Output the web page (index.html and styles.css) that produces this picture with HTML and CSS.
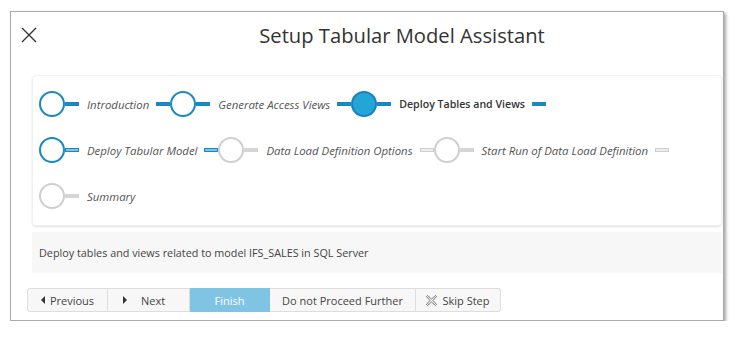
FILE: index.html
```html
<!DOCTYPE html>
<html lang="en">
<head>
  <meta charset="UTF-8">
  <title>Setup Tabular Model Assistant</title>
  <link rel="stylesheet" href="styles.css">
</head>
<body>
  <div class="dialog">
    <div class="header">
      <span class="close-button">
        <svg width="16" height="16" viewBox="0 0 16 16"><path d="M1 1 L15 15 M15 1 L1 15" stroke="#333" stroke-width="1.4" fill="none"/></svg>
      </span>
      <h1 class="title">Setup Tabular Model Assistant</h1>
    </div>

    <!-- Steps -->
    <div class="steps">
      <div class="step done">
        <span class="circle"></span><span class="line"></span>
        <span class="label">Introduction</span><span class="line"></span>
      </div>
      <div class="step done">
        <span class="circle"></span><span class="line"></span>
        <span class="label">Generate Access Views</span><span class="line"></span>
      </div>
      <div class="step done current">
        <span class="circle"></span><span class="line"></span>
        <span class="label">Deploy Tables and Views</span><span class="line"></span>
      </div>
      <div class="step next">
        <span class="circle"></span><span class="line hollow"></span>
        <span class="label">Deploy Tabular Model</span><span class="line hollow"></span>
      </div>
      <div class="step todo">
        <span class="circle"></span><span class="line"></span>
        <span class="label">Data Load Definition Options</span><span class="line hollow"></span>
      </div>
      <div class="step todo">
        <span class="circle"></span><span class="line"></span>
        <span class="label">Start Run of Data Load Definition</span><span class="line hollow"></span>
      </div>
      <div class="step todo">
        <span class="circle"></span><span class="line"></span>
        <span class="label">Summary</span>
      </div>
    </div>

    <div class="description">Deploy tables and views related to model IFS_SALES in SQL Server</div>

    <div class="buttons">
      <button class="btn btn-prev"><span class="tri tri-left"></span>Previous</button>
      <button class="btn btn-next"><span class="tri tri-right"></span>Next</button>
      <button class="btn btn-finish">Finish</button>
      <button class="btn btn-stop">Do not Proceed Further</button>
      <button class="btn btn-skip">
        <svg width="11" height="11" viewBox="0 0 11 11"><path d="M1.5 0.5 L5.5 4 L9.5 0.5 L10.5 1.5 L7 5.5 L10.5 9.5 L9.5 10.5 L5.5 7 L1.5 10.5 L0.5 9.5 L4 5.5 L0.5 1.5 Z" fill="none" stroke="#666" stroke-width="0.9"/></svg>
        Skip Step
      </button>
    </div>
  </div>
</body>
</html>
```

FILE: styles.css
```css
body {
  margin: 0;
  background-color: #ffffff;
  font-family: 'Open Sans', 'Noto Sans', sans-serif;
  color: #444;
}
.dialog {
  width: 714px;
  height: 310px;
  box-sizing: border-box;
  margin: 11px 0 0 10px;
  border: 1px solid #aaa;
  background-color: #ffffff;
  box-shadow: 2px 2px 3px rgba(0, 0, 0, 0.35);
}
.header {
  display: flex;
  align-items: center;
  height: 46px;
}
.close-button {
  display: flex;
  width: 16px;
  height: 16px;
  margin-left: 10px;
  margin-right: 22px;
}
.title {
  flex: 1;
  margin: 0;
  padding-left: 22px;
  text-align: center;
  font-size: 20.2px;
  font-weight: 400;
  color: #333;
}
.steps {
  display: flex;
  flex-wrap: wrap;
  row-gap: 20px;
  margin: 17px 1px 0 21px;
  padding: 15px 6px 16px;
  border: 1px solid #f0f0f0;
  border-radius: 4px;
  box-shadow: 0 1px 2px rgba(0, 0, 0, 0.12);
}
.step {
  display: flex;
  align-items: center;
  height: 26px;
}
.circle {
  width: 26px;
  height: 26px;
  box-sizing: border-box;
  border-radius: 50%;
  border: 2px solid #1b88c6;
}
.line {
  width: 14px;
  height: 4px;
  box-sizing: border-box;
  background-color: #1b88c6;
}
.label {
  margin: 0 7px 0 8px;
  font-size: 11.4px;
  font-style: italic;
  color: #555;
  white-space: nowrap;
}
.current .circle {
  background-color: #22a6d6;
  border-color: #1b80bf;
}
.current .label {
  font-size: 10.6px;
  font-style: normal;
  font-weight: 600;
  color: #333;
}
.line.hollow {
  border: 1px solid #1b88c6;
  background-color: #7cc3e6;
}
.todo .circle {
  border-color: #cfcfcf;
}
.todo .line {
  background-color: #d6d6d6;
}
.todo .line.hollow {
  border: 1px solid #cfcfcf;
  background-color: #ececec;
}
.description {
  margin: 6px 1px 0 21px;
  height: 41px;
  padding-left: 7px;
  display: flex;
  align-items: center;
  background-color: #f7f7f7;
  font-size: 10.8px;
  color: #444;
}
.buttons {
  display: flex;
  margin: 15px 0 0 16px;
}
.btn {
  display: flex;
  align-items: center;
  justify-content: center;
  gap: 5px;
  height: 24px;
  padding: 0;
  border: 1px solid #ddd;
  border-left: none;
  background-color: #f7f7f7;
  font-family: 'Open Sans', 'Noto Sans', sans-serif;
  font-size: 11px;
  color: #444;
  white-space: nowrap;
}
.btn-prev {
  width: 81px;
  border-left: 1px solid #ddd;
  border-radius: 3px 0 0 3px;
}
.btn-next {
  width: 82px;
  justify-content: flex-start;
  gap: 14px;
  padding-left: 15px;
}
.btn-finish {
  width: 80px;
  background-color: #80c4e4;
  border-color: #80c4e4;
  color: #ffffff;
}
.btn-stop {
  width: 146px;
}
.btn-skip {
  width: 85px;
  border-radius: 0 3px 3px 0;
}
.tri {
  width: 0;
  height: 0;
  border-top: 4px solid transparent;
  border-bottom: 4px solid transparent;
}
.tri-left {
  border-right: 4px solid #333;
}
.tri-right {
  border-left: 4px solid #333;
}
```
